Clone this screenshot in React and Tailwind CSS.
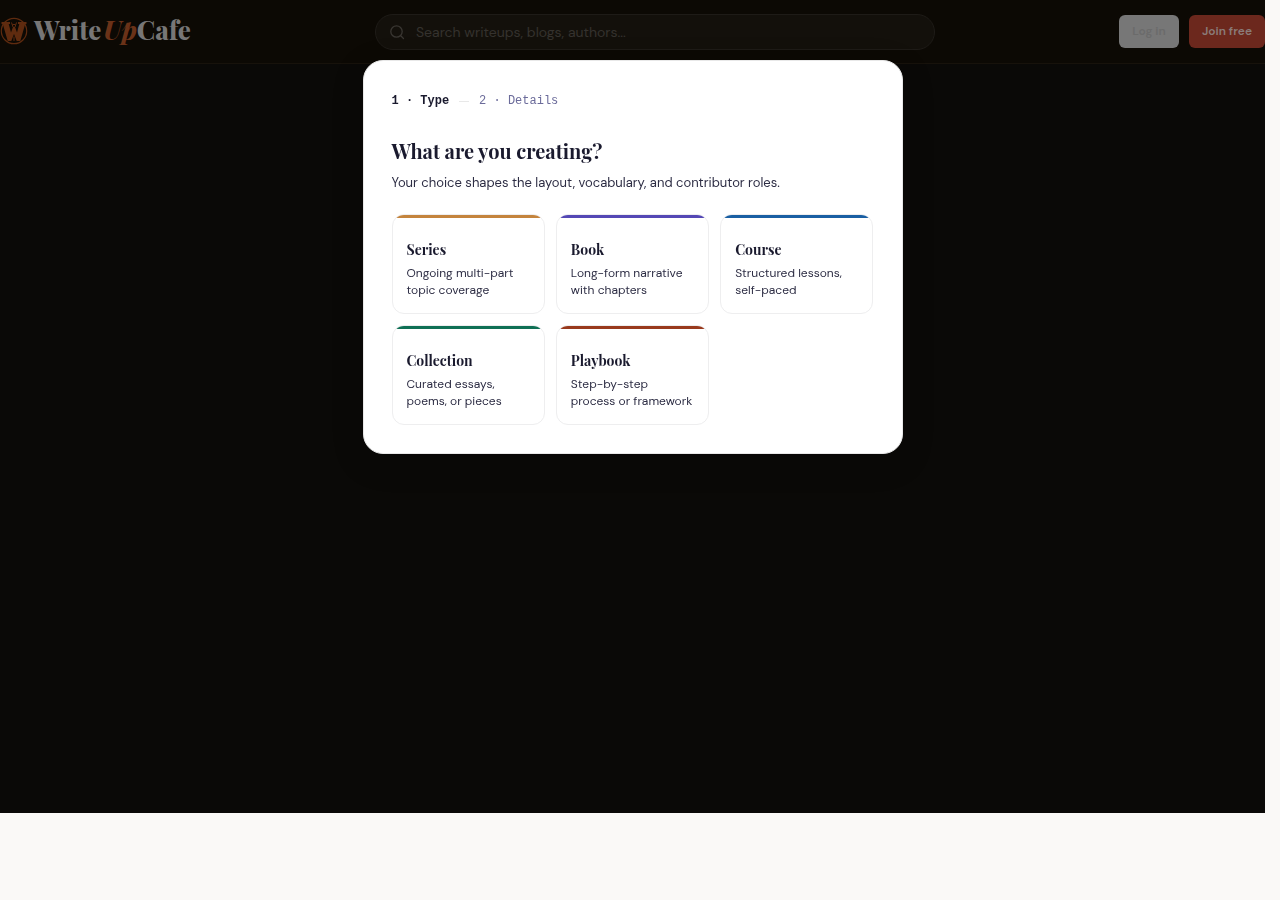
import React, { useState } from "react";

const TYPES = [
  {
    name: "Series",
    description: "Ongoing multi-part topic coverage",
    bar: "bg-[#c4843d]",
  },
  {
    name: "Book",
    description: "Long-form narrative with chapters",
    bar: "bg-[#5448b5]",
  },
  {
    name: "Course",
    description: "Structured lessons, self-paced",
    bar: "bg-[#1a5fa3]",
  },
  {
    name: "Collection",
    description: "Curated essays, poems, or pieces",
    bar: "bg-[#0f7055]",
  },
  {
    name: "Playbook",
    description: "Step-by-step process or framework",
    bar: "bg-[#993a1d]",
  },
];

const LogoMark = () => (
  <svg className="size-7 shrink-0" viewBox="0 0 28 28" aria-hidden="true">
    <circle cx="14" cy="14" r="12.7" fill="none" stroke="#5f2b0f" strokeWidth="1.2" />
    <path
      d="M1.5 5h8.500v2H8.700l2.300 8.500L13 10h2l2 5.500L19.300 7H18V5h8.500v2h-1.300L20.300 24h-3.600L14 17l-2.700 7H7.700L2.800 7H1.500z"
      fill="#5f2b0f"
    />
    <path
      d="M11.500 5.500l1.500 4.500M16.500 5.500L15 10M12.500 7.500h3M14 19.500V24"
      stroke="#5f2b0f"
      strokeWidth="1"
    />
  </svg>
);

const Header = () => (
  <header className="flex h-16 items-center justify-between border-b border-[#17120b] bg-[#0c0904]">
    <a href="#home" className="flex items-center gap-[6px] pb-px">
      <LogoMark />
      <span className="pb-[2px] font-['Playfair_Display','Liberation_Serif',serif] text-[26px] leading-8 font-extrabold text-[#777676]">
        Write<em className="ml-0.5 text-[#6a3218]">Up</em>Cafe
      </span>
    </a>

    <label className="flex h-9 w-full max-w-[560px] items-center gap-[11px] rounded-full border border-[#1e1b17] bg-[#13100b] px-[13px]">
      <svg
        className="size-4 shrink-0"
        viewBox="0 0 16 16"
        fill="none"
        stroke="#393632"
        strokeWidth="1.3"
        strokeLinecap="round"
        aria-hidden="true"
      >
        <circle cx="7.5" cy="7.5" r="5.7" />
        <path d="M11.700 11.700l2.800 2.800" />
      </svg>
      <input
        type="search"
        aria-label="Search"
        placeholder="Search writeups, blogs, authors..."
        className="w-full bg-transparent text-sm text-[#777676] outline-none placeholder:text-[#35322e]"
      />
    </label>

    <div className="flex gap-[10px] text-xs font-semibold">
      <button
        type="button"
        className="h-[33px] w-[60px] rounded-md bg-[#777777] pb-[2px] text-[#6b6b6b]"
      >
        Log in
      </button>
      <button
        type="button"
        className="h-[33px] w-[76px] rounded-md bg-[#6c281d] pb-[2px] text-[#8a7b78]"
      >
        Join free
      </button>
    </div>
  </header>
);

const TypeCard = ({ type, onSelect }) => (
  <button
    type="button"
    onClick={() => onSelect(type.name)}
    className="relative flex flex-col overflow-hidden rounded-xl border border-[#eeeeef] bg-white px-[14px] pt-[25px] pb-[14px] text-left"
  >
    <span className={`absolute inset-x-0 top-0 h-[3px] ${type.bar}`} />
    <span className="font-['Playfair_Display','Liberation_Serif',serif] text-sm leading-5 font-bold text-[#1a1a2e]">
      {type.name}
    </span>
    <span className="mt-[5px] text-xs leading-[17px] text-[#2d2d44]">
      {type.description}
    </span>
  </button>
);

const CreateDialog = () => {
  const [, setSelected] = useState(null);

  return (
    <section
      role="dialog"
      aria-labelledby="create-title"
      className="w-full max-w-[540px] rounded-[20px] border border-[#e8e8e8] bg-white p-7 shadow-[0_8px_32px_rgba(0,0,0,0.18)]"
    >
      <ol className="flex items-center gap-[10px] font-['Liberation_Mono',monospace] text-xs leading-6">
        <li className="font-bold text-[#1a1a2e]">1 · Type</li>
        <li aria-hidden="true" className="h-px w-[10px] bg-[#e8e8e8]" />
        <li className="text-[#6b6b9a]">2 · Details</li>
      </ol>

      <h1
        id="create-title"
        className="mt-6 font-['Playfair_Display','Liberation_Serif',serif] text-xl leading-7 font-bold text-[#1a1a2e]"
      >
        What are you creating?
      </h1>
      <p className="mt-2 text-[13px] leading-5 text-[#2d2d44]">
        Your choice shapes the layout, vocabulary, and contributor roles.
      </p>

      <div className="mt-[21px] grid grid-cols-3 gap-[11px]">
        {TYPES.map((type) => (
          <TypeCard key={type.name} type={type} onSelect={setSelected} />
        ))}
      </div>
    </section>
  );
};

const App = () => (
  <div className="min-h-screen bg-[#faf9f7] pr-[15px] font-['DM_Sans',Inter,sans-serif]">
    <div className="relative min-h-[813px] bg-[#0a0907]">
      <Header />
      <div className="absolute inset-0 flex items-start justify-center pt-[60px] will-change-transform">
        <CreateDialog />
      </div>
    </div>
  </div>
);

export default App;
